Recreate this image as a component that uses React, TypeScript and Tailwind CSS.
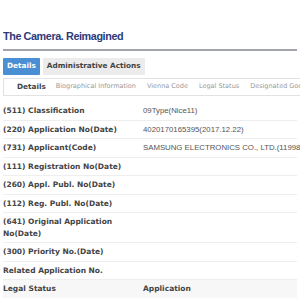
import React from 'react';

const rows: { label: string; value?: string }[] = [
    { label: '(511) Classification', value: '09Type(Nice11)' },
    { label: '(220) Application No(Date)', value: '4020170165395(2017.12.22)' },
    { label: '(731) Applicant(Code)', value: 'SAMSUNG ELECTRONICS CO., LTD.(119981042713)' },
    { label: '(111) Registration No(Date)' },
    { label: '(260) Appl. Publ. No(Date)' },
    { label: '(112) Reg. Publ. No(Date)' },
    { label: '(641) Original Application No(Date)' },
    { label: '(300) Priority No.(Date)' },
    { label: 'Related Application No.' },
];

const subTabs = ['Biographical Information', 'Vienna Code', 'Legal Status', 'Designated Goods'];

const App = () => {
    return (
        <div className="w-[300px] h-[300px] overflow-hidden bg-white font-['DejaVu_Sans',sans-serif]">
            {/* Title */}
            <div className="pt-[29px] px-[3px]">
                <h1 className="font-['Liberation_Sans',sans-serif] font-bold text-[10.8px] tracking-[-0.4px] text-[#2d3a78] leading-[14px]">
                    The Camera. Reimagined
                </h1>
                <div className="mt-[6px] h-[2px] bg-[#a3a5ad]" />
            </div>

            {/* Main tabs */}
            <div className="flex gap-[3px] px-[3px] mt-[7px]">
                <div className="bg-[#4a8fd3] text-white font-bold text-[7.3px] px-[4px] h-[17px] flex items-center rounded-[1px]">
                    Details
                </div>
                <div className="bg-[#ececec] text-[#444] font-bold text-[7.3px] px-[4px] h-[17px] flex items-center">
                    Administrative Actions
                </div>
            </div>

            {/* Sub tabs */}
            <div className="ml-[3px] mt-[3px] h-[18px] border border-[#e2e2e2] border-r-0 flex items-center whitespace-nowrap overflow-hidden">
                <span className="ml-[13px] font-bold text-[7.3px] text-[#444]">Details</span>
                <div className="flex gap-[11px] ml-[10px] text-[6.5px] text-[#999]">
                    {subTabs.map(t => (
                        <span key={t}>{t}</span>
                    ))}
                </div>
            </div>

            {/* Detail rows */}
            <div className="mt-[6px] px-[3px]">
                {rows.map(r => (
                    <div key={r.label} className="flex border-b border-[#eeeeee] py-[3px]">
                        <div className="w-[140px] shrink-0 pr-[4px] font-bold text-[7.5px] leading-[11.5px] text-[#444]">
                            {r.label}
                        </div>
                        <div className="font-['Liberation_Sans',sans-serif] text-[7.8px] leading-[11.5px] text-[#555] whitespace-nowrap">
                            {r.value}
                        </div>
                    </div>
                ))}
                <div className="flex bg-[#f7f7f7] py-[3px]">
                    <div className="w-[140px] shrink-0 font-bold text-[7.5px] leading-[11.5px] text-[#444]">Legal Status</div>
                    <div className="font-bold text-[7.5px] leading-[11.5px] text-[#444]">Application</div>
                </div>
            </div>
        </div>
    );
};

export default App;
